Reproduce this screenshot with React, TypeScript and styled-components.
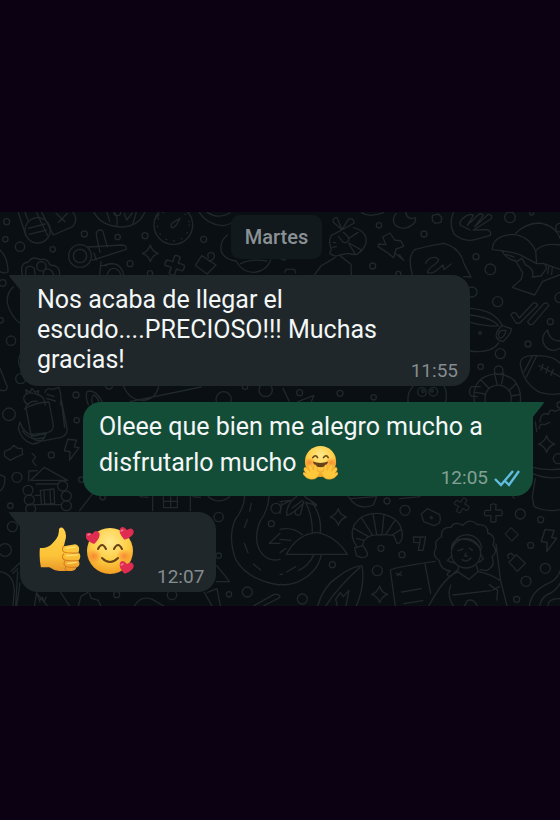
import React from "react";
import styled, { createGlobalStyle, css } from "styled-components";

const GlobalStyle = createGlobalStyle`
  * { box-sizing: border-box; }
  body { margin: 0; background: #0c0013; }
`;

const Page = styled.div`
  min-height: 100vh;
  display: flex;
  flex-direction: column;
  justify-content: center;
  padding-bottom: 2px;
  font-family: Roboto, "Noto Sans", sans-serif;
`;

const Chat = styled.main`
  position: relative;
  isolation: isolate;
  display: flex;
  flex-direction: column;
  gap: 16px;
  padding: 3px 27px 14px 20px;
  background: #0a0f13;
  overflow: hidden;
`;

const Wallpaper = styled.svg`
  position: absolute;
  inset: 0;
  width: 100%;
  height: 100%;
  z-index: -1;
  fill: none;
  stroke: #20282b;
  stroke-width: 4;
  stroke-linecap: round;
  stroke-linejoin: round;
`;

const DayChip = styled.time`
  align-self: center;
  padding: 10px 14px;
  border-radius: 9px;
  background: #11191d;
  color: #8b9296;
  font-size: 20px;
  font-weight: 500;
  line-height: 24px;
`;

const Bubble = styled.article<{ $sent?: boolean; $compact?: boolean }>`
  position: relative;
  display: flex;
  justify-content: space-between;
  align-items: flex-end;
  align-self: flex-start;
  color: #f3f7f7;
  background: #20272a;
  border-radius: 0 18px 18px 18px;
  padding: 10px 12px 11px 17px;
  width: ${(p) => (p.$compact ? "auto" : "min(450px, 100%)")};

  &::before {
    content: "";
    position: absolute;
    top: 0;
    left: -11px;
    width: 12px;
    height: 16px;
    background: inherit;
    clip-path: polygon(0 0, 100% 0, 100% 100%, 8% 14%);
  }

  ${(p) =>
    p.$sent &&
    css`
      align-self: flex-end;
      background: #144d37;
      border-radius: 18px 0 18px 18px;
      padding: 7px 13px 15px 16px;
      &::before {
        left: auto;
        right: -11px;
        clip-path: polygon(0 0, 100% 0, 92% 14%, 0 100%);
      }
    `}
`;

const Message = styled.p<{ $tall?: boolean }>`
  margin: 0;
  flex: 1 1 auto;
  min-width: 0;
  font-size: 25px;
  line-height: ${(p) => (p.$tall ? 36 : 30)}px;
`;

const EmojiRow = styled.p`
  margin: 0;
  display: flex;
  gap: 4px;
  padding: 5px 23px 6px 1px;
`;

const Meta = styled.footer<{ $overlap?: boolean }>`
  display: flex;
  align-items: center;
  gap: 6px;
  flex: none;
  color: ${(p) => (p.$overlap ? "#83a094" : "#858c8f")};
  font-size: 19px;
  line-height: 16px;
  margin-left: ${(p) => (p.$overlap ? "-78px" : "0")};
  margin-bottom: ${(p) => (p.$overlap ? "-6px" : "-4px")};
`;

const Glyph = styled.svg<{ $size: number }>`
  width: ${(p) => p.$size}px;
  height: ${(p) => p.$size}px;
  flex: none;
`;

const InlineGlyph = styled(Glyph)`
  vertical-align: -9px;
`;

const Ticks = styled.svg`
  width: 26px;
  height: 18px;
  fill: none;
  stroke: #61bce0;
  stroke-width: 2.4;
`;

const star = "M0-25Q4-6 24 0Q6 6 0 25Q-5 7-24 0Q-6-6 0-25Z";
const plus = "M-8-25Q0-30 8-25L7-9L24-9Q30 0 24 8L8 8L8 25Q0 30-8 25L-7 8L-25 8Q-29 0-24-8L-8-8Z";
const tag = "M-22-2L0-25L27 1L3 25Z";
const bolt = "M-10-29L15-26L8-7L22-5L-5 31L-4 7L-20 4Z";

type Dot = [number, number, number];
const Dots = ({ items }: { items: Dot[] }) => (
  <>
    {items.map(([x, y, r]) => (
      <circle key={`${x}-${y}`} cx={x} cy={y} r={r} />
    ))}
  </>
);

const Doodles = () => (
  <Wallpaper viewBox="0 212 560 394" preserveAspectRatio="xMidYMid slice" aria-hidden="true">
    <g transform="translate(0 205) scale(.33333)">
      <Dots
        items={[
          [20, 50, 9], [16, 103, 8], [60, 125, 14], [158, 133, 8], [253, 87, 9], [353, 96, 8],
          [435, 92, 9], [390, 176, 9], [611, 103, 9], [8, 234, 10], [2, 346, 8], [33, 407, 14],
          [62, 521, 15], [228, 570, 9], [327, 542, 10], [671, 583, 23], [797, 555, 20], [735, 545, 8],
          [450, 205, 8],
        ]}
      />
      <path d="M55 23L78 92M125 22L160 90L218 65Q236 43 219 22M110 23L143 92M168 25L195 50M202 25L176 52" />
      <circle cx="113" cy="76" r="38" />
      <path d="M85 70L135 57M88 88L139 75M75 22L84 46" />
      <path d="M282 22Q304 65 370 66Q418 62 434 22M321 23L329 50M344 23Q355 37 350 60M373 25L380 45L397 24M409 22L399 56" />
      <circle cx="352" cy="22" r="10" />
      <circle cx="520" cy="60" r="58" />
      <circle cx="520" cy="60" r="48" strokeDasharray="2 22" />
      <path d="M514 68Q510 58 520 52L540 40L529 60Q520 70 514 68M477 29L463 45M598 22Q620 58 668 62Q694 60 706 42M622 22Q655 44 690 24" />
      <circle cx="240" cy="153" r="34" />
      <circle cx="240" cy="153" r="20" />
      <path d="M263 126L367 120Q381 122 379 133L276 166M300 142L289 91Q288 76 300 75Q310 74 311 87L322 126M282 144L289 165M303 170L299 209M315 180Q360 165 371 209M322 209Q326 190 342 190Q356 190 362 209M304 182L320 181" />
      <path d={star} transform="translate(451 145)" />
      <path d={plus} transform="translate(524 181) rotate(18) scale(1.1)" />
      <path d="M605 152L586 181L621 207L648 180ZM625 158Q619 143 635 142Q650 149 638 164L628 169" />
      <path d="M67 209Q58 174 85 171Q98 151 121 164Q142 158 150 180Q181 181 179 209M77 209L78 189Q91 177 103 190L105 209M110 184A14 14 0 1 0 126 170Q111 170 110 184M129 209L133 195Q151 184 161 209" />
      <path d="M0 135Q24 158 24 201Q10 207 0 200M40 245Q19 264 22 295Q34 338 63 357M61 449Q51 466 60 487M0 490L22 546Q20 562 0 555" />
      <path d="M682 90Q656 111 665 142Q676 164 708 168M708 168Q728 204 764 202Q801 197 812 165M722 176Q755 160 800 168" />
      <path d="M86 600Q68 591 72 575Q82 557 107 567Q132 569 136 600M80 568L77 554L90 562L96 550L106 562L116 556L114 570M135 562Q139 546 158 553L176 547Q187 574 181 600M141 568L163 575M139 580L166 588M265 600Q254 570 262 559Q287 552 306 589M278 600Q272 575 281 570Q290 573 297 590M371 545Q391 588 432 586Q467 582 476 545M390 590L603 546" />
    </g>
    <g transform="translate(280 205) scale(.33333)">
      <Dots
        items={[
          [297, 61, 8], [432, 87, 9], [588, 155, 9], [631, 193, 16], [690, 37, 16], [278, 183, 9],
          [576, 261, 15], [653, 290, 15], [811, 350, 9], [744, 417, 9], [661, 446, 15], [602, 485, 8],
          [656, 496, 13], [59, 563, 9], [180, 565, 9], [281, 577, 8], [840, 278, 15], [355, 207, 8],
          [755, 24, 6], [840, 68, 13],
        ]}
      />
      <path d="M186 74L160 52Q157 38 171 38L186 74L205 43Q220 36 223 54L186 74M183 76L154 91Q144 112 154 132L149 145Q163 158 179 150L204 145Q219 150 232 148Q263 125 258 99Q253 76 220 68M190 82L207 98Q207 116 190 112L175 94M205 101L234 82M207 114L242 134M207 117L225 146M160 112L167 113M158 127L169 125M179 150Q185 157 213 178L214 209M165 158L123 183L104 209" />
      <path d="M308 96L330 84L344 105L363 108L371 124L348 132L341 158L321 142L294 125L296 117L318 119ZM344 143L371 166L358 149" />
      <path d="M348 25Q333 45 347 62Q376 82 405 52L407 38Q382 47 377 22" />
      <path d="M457 31L475 27L485 37L483 52L466 55L457 47ZM245 23Q268 39 310 23M520 23Q505 57 523 88Q555 116 596 101L631 91Q635 77 620 74L580 75L633 42Q640 29 625 28L584 65L610 31Q603 21 592 32L562 61L580 31Q568 23 547 42Q539 47 540 60L570 75" />
      <path d="M397 209Q381 154 404 134Q448 121 491 115Q539 126 552 176L573 216L551 215M437 176Q443 156 466 157Q485 163 466 177Q446 190 442 202Q452 210 475 192L489 180L492 194L513 177" />
      <path d="M637 134Q638 92 700 88Q747 93 767 138L770 176Q746 163 719 149Q682 137 637 134M707 85Q736 55 778 54Q828 62 840 100M769 135Q793 113 840 120M771 176L790 175L840 193M666 138Q682 166 711 169L726 160L736 179Q765 192 757 216L783 213L800 190L795 178M705 165L728 203L724 223L697 247L764 270L788 229L840 209M678 148L702 156M807 184L803 205M817 188L815 208" />
      <path d="M571 310Q645 315 667 362L694 371Q694 386 669 410Q650 407 648 391Q653 371 667 362M571 330Q635 338 655 362Q632 367 571 352M571 438Q633 447 656 414M656 386Q657 374 678 376Q674 397 660 400Q654 396 656 386" />
      <circle cx="600" cy="384" r="4" />
      <path d="M693 330Q699 318 708 325L718 339L760 294Q771 292 773 301L719 354L708 354ZM743 350L792 295Q804 291 806 302L758 358Q748 362 743 350" />
      <path d="M803 375Q778 397 795 423Q813 445 840 430M803 375Q807 407 840 408M721 479Q718 454 757 452Q819 449 840 474M721 479Q733 540 780 562Q815 572 840 566M756 455L732 501M770 453L739 516M777 482L840 515M789 478L783 496M804 485L798 504M820 493L813 511" />
      <path d="M585 600Q573 545 606 520Q657 491 702 525Q729 560 719 600M617 600Q609 558 635 545Q668 531 690 560Q698 580 690 600M643 504L651 537M671 504L665 537M602 524L627 550M586 562L615 567M708 536L686 558M721 568L694 573M601 545L574 545Q562 561 574 574L592 574" />
      <path d="M384 590Q381 562 400 543M492 543Q503 561 497 590M9 550L27 588M54 590L102 571L94 590" />
      <circle cx="426" cy="561" r="13" />
      <circle cx="460" cy="560" r="13" />
      <circle cx="429" cy="558" r="4" />
      <circle cx="456" cy="557" r="4" />
      <path d="M14 202L18 193L43 193L47 204M0 160L14 165L25 154" />
    </g>
    <g transform="translate(0 400) scale(.33333)">
      <Dots
        items={[
          [27, 43, 19], [230, 61, 8], [154, 165, 9], [51, 232, 15], [31, 317, 8], [37, 380, 15],
          [15, 450, 19], [656, 351, 14], [656, 467, 8], [828, 325, 15], [814, 371, 9], [350, 584, 9],
          [516, 585, 14], [244, 239, 8], [84, 271, 15], [88, 300, 15], [92, 327, 15], [188, 258, 15],
          [199, 288, 15], [199, 317, 15], [308, 292, 8],
        ]}
      />
      <path d="M77 20L93 104Q97 126 132 122L184 112Q204 104 201 85L184 0M73 27Q108 6 147 6L160 75Q160 94 142 98L97 103M77 20Q88 2 112 4M184 3L194 82" />
      <path d="M60 66Q70 101 103 108L139 99Q132 128 98 132Q65 123 55 86L60 66M67 92Q91 126 130 113" />
      <path d="M14 154L32 146L41 136L53 145L66 145L68 163L46 173L30 181L13 167ZM96 160L107 171L97 184L108 197" />
      <path d={bolt} transform="translate(214 148) scale(1.05)" />
      <path d="M86 243L87 213L112 212M92 241L133 202L203 241ZM109 252L172 252M105 286L121 286M104 314L182 314M121 271L162 267L164 310L124 313ZM132 269L134 312M150 270L152 310M0 225L14 230Q17 260 0 273M239 332L278 281" />
      <path d="M458 332V290M571 332V290M490 290L491 323L532 323L532 290M512 290V323M491 304L532 304M420 290L444 292M579 290L601 292M625 290Q656 315 689 290" />
      <path d="M734 290Q732 325 705 360Q683 413 707 478Q743 541 840 555M807 290Q803 335 780 364Q757 426 786 461Q807 486 840 478M754 310L749 333M742 359L733 383M733 430L744 458M760 492L782 510M840 400L808 430L840 430" />
      <path d="M0 515Q40 521 43 570L39 618M34 513L60 488M39 520L53 506M53 514L47 618M60 549L50 618M110 577L103 618M120 606L111 580L142 618M121 599L128 592L132 606L139 591M182 577L209 618M268 580L273 594L295 601L302 618M235 618L243 589L264 577M403 618Q422 585 457 598L491 618M613 577L636 618M622 577L651 566L661 618M650 497L679 532L688 545L649 545M760 618L821 584Q840 580 840 592L790 618" />
      <circle cx="687" cy="583" r="8" />
      <circle cx="742" cy="576" r="15" />
    </g>
    <g transform="translate(280 400) scale(.33333)">
      <Dots
        items={[
          [321, 303, 9], [375, 331, 15], [721, 342, 15], [782, 359, 9], [752, 436, 9], [796, 505, 15],
          [738, 544, 15], [710, 598, 9], [366, 464, 9], [303, 445, 9], [157, 494, 9], [292, 512, 15],
          [67, 597, 15], [835, 176, 15], [840, 15, 9],
        ]}
      />
      <path d={star} transform="translate(175 351)" />
      <path d={star} transform="translate(299 583)" />
      <path d={star} transform="translate(800 132)" />
      <path d={plus} transform="translate(640 339)" />
      <path d={plus} transform="translate(545 316) rotate(28) scale(.85)" />
      <path d={tag} transform="translate(693 403) scale(.8)" />
      <path d={tag} transform="translate(709 489)" />
      <path d="M685 475Q680 460 694 460L702 468M424 342L442 326L478 343Q484 354 478 369L463 377L431 365Z" />
      <circle cx="454" cy="353" r="3" />
      <path d={bolt} transform="translate(806 420) scale(1.1)" />
      <path d="M400 411L437 411L429 451L415 451L419 428L402 427ZM421 411L420 426" />
      <path d="M232 442Q207 410 222 375Q248 335 303 341Q366 354 367 405Q366 431 351 430L341 406Q315 402 297 405Q255 402 247 435Q261 451 263 466Q251 479 229 467L224 443L249 437M222 385L264 409M245 354L277 405M279 342L290 403M312 343L306 402M345 361L318 402M363 388L337 405M229 415L251 421" />
      <path d="M19 463Q51 402 111 397Q169 409 202 463ZM0 388Q39 380 67 404M0 418L33 421M124 464Q113 520 50 547Q24 557 0 553M102 464Q85 499 56 511M47 500L20 516M0 524L8 522M18 445L0 458M77 307Q97 345 97 397M92 302Q126 344 121 398M71 310Q33 346 20 346Q19 310 50 290M68 301L37 324M71 305L61 344Q43 350 46 331M0 318L31 301L0 305M77 307L110 317M74 290L109 313M0 340L5 309" />
      <path d="M113 618Q129 560 174 530Q216 499 246 497Q256 555 229 618M137 618Q174 561 240 502M172 618L167 598L181 578L190 590L207 571L198 618" />
      <path d="M205 290Q233 334 280 315L290 290M210 296L286 290M359 296L420 290M698 290L703 294" />
      <path d="M346 618L331 511Q343 501 465 484M435 492L452 580M349 520L365 526M352 527L364 516M365 576L424 566M371 611L428 602" />
      <circle cx="558" cy="460" r="44" />
      <path d="M518 438Q528 405 562 404Q598 408 605 442M511 513Q481 510 478 482Q453 467 469 443Q461 421 485 411Q481 380 513 382Q523 362 548 376Q570 352 593 374Q625 372 623 399Q649 407 639 435Q656 454 636 471Q648 497 620 512L600 509M511 513Q492 526 511 529L533 509M514 447Q516 419 540 418Q576 411 604 449M516 466L502 482L522 489M601 461L610 476L598 487M534 452L549 447M568 444L577 451M558 459L554 468L562 468M546 479Q560 489 573 474M536 498L533 515L567 538L594 515L590 497M533 516Q495 528 446 618M594 515Q630 520 662 543L681 618M662 543L648 432M513 555Q499 584 520 618M628 554L653 572L650 600M519 585L633 572M553 618L562 602Q580 594 592 618M638 570L658 560" />
      <path d="M748 618Q754 572 805 550Q830 541 840 513M779 618Q784 588 813 579Q831 568 840 550M803 618Q805 594 840 596" />
      <path d="M758 202Q801 212 840 207M756 220Q799 238 840 232M757 292L762 319Q798 338 840 329M766 235L757 290M780 66Q781 35 806 43Q807 24 825 34L840 28M766 66L770 94M777 86Q780 68 794 74L809 67" />
    </g>
  </Wallpaper>
);

const FaceGradient = ({ id }: { id: string }) => (
  <radialGradient id={id} cx="50%" cy="30%" r="70%">
    <stop offset="0" stopColor="#ffe98c" />
    <stop offset=".55" stopColor="#ffcf48" />
    <stop offset="1" stopColor="#f29e22" />
  </radialGradient>
);

const BlushGradient = ({ id }: { id: string }) => (
  <radialGradient id={id}>
    <stop offset="0" stopColor="#f6762c" stopOpacity=".75" />
    <stop offset="1" stopColor="#f6762c" stopOpacity="0" />
  </radialGradient>
);

const ThumbsUp = () => (
  <Glyph $size={44} viewBox="0 0 44 46" role="img" aria-label="👍">
    <defs>
      <linearGradient id="thumb" x1="0" y1="0" x2="0" y2="1">
        <stop offset="0" stopColor="#ffd24a" />
        <stop offset=".65" stopColor="#fcc337" />
        <stop offset="1" stopColor="#e9972a" />
      </linearGradient>
    </defs>
    <path
      fill="url(#thumb)"
      d="M1 22Q8 22 12 19Q18 14 20 9Q21 5 21 2Q23-1 26 2Q29 6 28 12Q27 16 26 20L38 18Q42 19 42 23Q42 26 41 27Q44 28 43 32Q43 34 41 35Q43 37 42 40Q41 42 39 42Q39 45 34 46L21 46Q15 45 11 42L2 42Q0 32 1 22Z"
    />
    <path
      fill="none"
      stroke="#d88220"
      strokeWidth="1.2"
      strokeLinecap="round"
      d="M26 20Q24 21 25 25Q26 28 41 27M26 28Q23 31 26 34Q28 36 41 35M27 36Q25 39 28 41Q32 43 39 42M28 42Q26 45 30 46"
    />
    <path fill="none" stroke="#ffe071" strokeWidth="1.4" strokeLinecap="round" d="M29 22L38 21M29 30L40 29M30 38L39 37" />
  </Glyph>
);

const heart = "M0 6Q-8 1-7-4Q-5-8 0-4Q4-9 7-4Q8 1 0 6Z";

const HeartsFace = () => (
  <Glyph $size={48} viewBox="0 0 48 48" role="img" aria-label="🥰">
    <defs>
      <FaceGradient id="loveFace" />
      <BlushGradient id="loveBlush" />
    </defs>
    <circle cx="24" cy="24" r="23" fill="url(#loveFace)" />
    <ellipse cx="8" cy="29" rx="8" ry="7" fill="url(#loveBlush)" />
    <ellipse cx="38" cy="29" rx="8" ry="7" fill="url(#loveBlush)" />
    <path
      fill="none"
      stroke="#66421a"
      strokeWidth="2"
      strokeLinecap="round"
      d="M12 22Q16 14 20 22M28 22Q32 14 36 22M16 31Q24 39 32 31"
    />
    <g fill="#df2c50">
      <path d={heart} transform="translate(7 11) rotate(-10)" />
      <path d={heart} transform="translate(40 7) rotate(14)" />
      <path d={heart} transform="translate(40 41) rotate(14)" />
    </g>
    <g fill="none" stroke="#f4768c" strokeWidth="1.4" strokeLinecap="round">
      <path d="M2 8L4 7M35 4L37 3M35 38L37 37" />
    </g>
  </Glyph>
);

const HuggingFace = () => (
  <InlineGlyph $size={35} viewBox="0 0 36 36" role="img" aria-label="🤗">
    <defs>
      <FaceGradient id="hugFace" />
      <BlushGradient id="hugBlush" />
    </defs>
    <circle cx="18" cy="17" r="16" fill="url(#hugFace)" />
    <ellipse cx="7" cy="18" rx="6" ry="5" fill="url(#hugBlush)" />
    <ellipse cx="29" cy="18" rx="6" ry="5" fill="url(#hugBlush)" />
    <path fill="none" stroke="#66421a" strokeWidth="1.6" strokeLinecap="round" d="M10 13Q13 9 15 13M21 13Q24 9 26 13" />
    <path fill="#66421a" d="M10 17Q18 20 26 17Q24 23 18 23Q12 23 10 17Z" />
    <g fill="#ffc83b" stroke="#e9a030" strokeWidth=".6" strokeLinejoin="round">
      <path id="hugHand" d="M1 24Q2 22 4 24L7 27L5 21Q7 19 9 22L11 26L11 21Q13 19 14 22L15 27Q18 27 17 29L15 33Q12 36 7 35Q3 34 1 31Q-1 29 1 28L3 29L1 26Z" />
      <use href="#hugHand" transform="translate(36 0) scale(-1 1)" />
    </g>
  </InlineGlyph>
);

export default function App() {
  return (
    <>
      <GlobalStyle />
      <Page>
        <Chat>
          <Doodles />
          <DayChip>Martes</DayChip>
          <Bubble>
            <Message>
              Nos acaba de llegar el
              <br />
              escudo....PRECIOSO!!! Muchas
              <br />
              gracias!
            </Message>
            <Meta>
              <time dateTime="11:55">11:55</time>
            </Meta>
          </Bubble>
          <Bubble $sent>
            <Message $tall>
              Oleee que bien me alegro mucho a
              <br />
              disfrutarlo mucho <HuggingFace />
            </Message>
            <Meta $overlap>
              <time dateTime="12:05">12:05</time>
              <Ticks viewBox="0 0 26 18" role="img" aria-label="Leído">
                <path d="M1 10L7 16L19 2M11 12L15 16L25 2" />
              </Ticks>
            </Meta>
          </Bubble>
          <Bubble $compact>
            <EmojiRow>
              <ThumbsUp />
              <HeartsFace />
            </EmojiRow>
            <Meta>
              <time dateTime="12:07">12:07</time>
            </Meta>
          </Bubble>
        </Chat>
      </Page>
    </>
  );
}
